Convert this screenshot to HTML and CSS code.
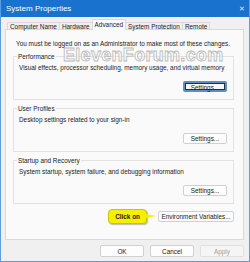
FILE: index.html
```html
<!DOCTYPE html>
<html>
    <head>
        <meta charset="UTF-8">
        <meta name="viewport" content="width=device-width, initial-scale=1.0">
        <title>System Properties</title>
        <link rel="stylesheet" href="styles.css">
    </head>

    <body>
        <div class="window">
            <div class="titlebar">
                <span class="title">System Properties</span>
                <span class="close">&#x2715;</span>
            </div>

            <div class="content">
                <div class="tabs">
                    <div class="tab">Computer Name</div>
                    <div class="tab">Hardware</div>
                    <div class="tab active">Advanced</div>
                    <div class="tab">System Protection</div>
                    <div class="tab">Remote</div>
                </div>

                <div class="panel">
                    <p class="note">You must be logged on as an Administrator to make most of these changes.</p>

                    <fieldset class="group">
                        <legend>Performance</legend>
                        <p>Visual effects, processor scheduling, memory usage, and virtual memory</p>
                        <div class="row"><button class="btn focus">Settings...</button></div>
                    </fieldset>

                    <fieldset class="group">
                        <legend>User Profiles</legend>
                        <p>Desktop settings related to your sign-in</p>
                        <div class="row"><button class="btn">Settings...</button></div>
                    </fieldset>

                    <fieldset class="group">
                        <legend>Startup and Recovery</legend>
                        <p>System startup, system failure, and debugging information</p>
                        <div class="row"><button class="btn">Settings...</button></div>
                    </fieldset>

                    <div class="env-row">
                        <span class="callout">Click on</span>
                        <button class="btn env">Environment Variables...</button>
                    </div>

                    <div class="watermark">ElevenForum.com</div>
                </div>

                <div class="footer">
                    <button class="btn big">OK</button>
                    <button class="btn big">Cancel</button>
                    <button class="btn big disabled">Apply</button>
                </div>
            </div>
        </div>
    </body>
</html>
```

FILE: styles.css
```css
* {
    box-sizing: border-box;
}
body {
    margin: 0;
    font-family: "Liberation Sans", Arial, sans-serif;
    font-size: 6.4px;
    line-height: 9px;
    color: #1a1a1a;
}
.window {
    width: 250px;
    height: 262px;
    border: 1px solid #5a9ee0;
    border-top: none;
    background-color: #f0f0f0;
    display: flex;
    flex-direction: column;
}
.titlebar {
    height: 17px;
    background-color: #1a72cf;
    color: #fff;
    display: flex;
    justify-content: space-between;
    align-items: center;
    padding: 0 4px 0 5px;
    font-size: 8px;
}
.close {
    font-size: 7px;
    color: #dbe8f7;
}
.content {
    flex: 1;
    padding: 2px 5px 0 4px;
    display: flex;
    flex-direction: column;
}
.tabs {
    display: flex;
    align-items: flex-end;
    height: 10px;
    padding-left: 2px;
    position: relative;
    z-index: 1;
}
.tab {
    height: 7px;
    line-height: 7px;
    padding: 0 2px;
    border: 1px solid #d9d9d9;
    border-bottom: none;
    border-right: none;
    background-color: #f0f0f0;
    white-space: nowrap;
}
.tab:last-child {
    border-right: 1px solid #d9d9d9;
}
.tab.active {
    height: 11px;
    line-height: 9px;
    background-color: #fafafa;
    border-right: 1px solid #d9d9d9;
    margin-bottom: -1px;
}
.tab.active + .tab {
    border-left: none;
}
.panel {
    position: relative;
    height: 211px;
    background-color: #fafafa;
    border: 1px solid #d9d9d9;
    padding: 9px 9px 0 7px;
}
.note {
    margin: 0 0 4px 3px;
    white-space: nowrap;
}
.group {
    margin: 0 0 4px 0;
    padding: 2px 6px 7px 5px;
    border: 1px solid #e2e2e2;
}
.group legend {
    padding: 0 1px;
    margin-left: -2px;
}
.group p {
    margin: 0;
    white-space: nowrap;
}
.row {
    display: flex;
    justify-content: flex-end;
    margin-top: 9px;
}
.btn {
    font-family: inherit;
    font-size: 6.4px;
    color: #1a1a1a;
    background-color: #fdfdfd;
    border: 1px solid #d0d0d0;
    border-radius: 2px;
    height: 11px;
    width: 44px;
    padding: 0;
    line-height: 9px;
}
.btn.focus {
    border: 2px solid #5b8fc7;
    outline: 1px solid #2c2c2c;
    outline-offset: -3px;
    background-color: #f7f7f7;
}
.env-row {
    display: flex;
    justify-content: flex-end;
    align-items: center;
    margin-top: 5px;
}
.btn.env {
    width: 76px;
}
.callout {
    position: relative;
    background-color: #f4f000;
    border: 1px solid #c8c400;
    border-radius: 4px;
    font-weight: bold;
    padding: 2px 6px;
    margin-right: 11px;
    box-shadow: 1px 1px 1px rgba(0, 0, 0, 0.25);
}
.callout::after {
    content: "";
    position: absolute;
    right: -10px;
    top: 4px;
    border-style: solid;
    border-width: 2px 0 2px 10px;
    border-color: transparent transparent transparent #f4f000;
}
.watermark {
    position: absolute;
    left: 57px;
    top: 17px;
    font-family: "Liberation Sans", Arial, sans-serif;
    font-size: 18px;
    line-height: 16px;
    font-weight: bold;
    color: rgba(255, 255, 255, 0.7);
    -webkit-text-stroke: 0.8px #b8b8b8;
    letter-spacing: 0.3px;
    pointer-events: none;
}
.footer {
    display: flex;
    justify-content: flex-end;
    gap: 6px;
    padding: 5px 0 0 0;
}
.btn.big {
    width: 44px;
    height: 12px;
}
.btn.disabled {
    color: #a0a0a0;
    background-color: #f5f5f5;
    border-color: #e0e0e0;
}
```
